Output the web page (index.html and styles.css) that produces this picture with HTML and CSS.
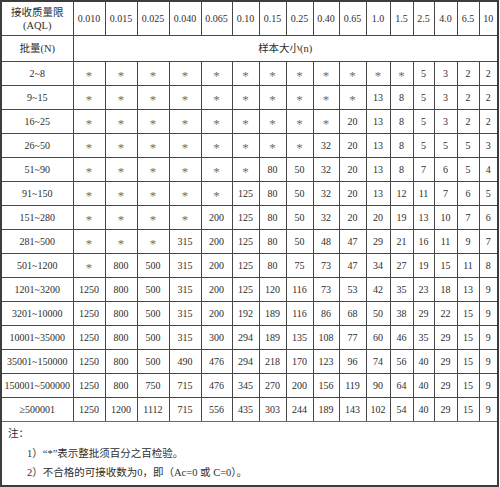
FILE: index.html
```html
<!DOCTYPE html>
<html lang="zh">
<head>
<meta charset="utf-8">
<title>AQL 样本大小</title>
<link rel="stylesheet" href="styles.css">
</head>
<body>
<div class="sheet">
<table class="aql">
<colgroup>
<col class="c0"><col class="w32"><col class="w32"><col class="w32"><col class="w32"><col class="w31"><col class="w27"><col class="w27"><col class="w27"><col class="w26"><col class="w27"><col class="w24"><col class="w23"><col class="w21"><col class="w23"><col class="w22"><col class="w18">
</colgroup>
<tr class="head">
<td class="cn">接收质量限<br>(AQL)</td>
<td>0.010</td><td>0.015</td><td>0.025</td><td>0.040</td><td>0.065</td><td>0.10</td><td>0.15</td><td>0.25</td><td>0.40</td><td>0.65</td><td>1.0</td><td>1.5</td><td>2.5</td><td>4.0</td><td>6.5</td><td>10</td>
</tr>
<tr class="sub">
<td class="cn">批量(N)</td>
<td class="cn" colspan="16">样本大小(n)</td>
</tr>
<tr><td>2~8</td><td class="s">*</td><td class="s">*</td><td class="s">*</td><td class="s">*</td><td class="s">*</td><td class="s">*</td><td class="s">*</td><td class="s">*</td><td class="s">*</td><td class="s">*</td><td class="s">*</td><td class="s">*</td><td>5</td><td>3</td><td>2</td><td>2</td></tr>
<tr><td>9~15</td><td class="s">*</td><td class="s">*</td><td class="s">*</td><td class="s">*</td><td class="s">*</td><td class="s">*</td><td class="s">*</td><td class="s">*</td><td class="s">*</td><td class="s">*</td><td>13</td><td>8</td><td>5</td><td>3</td><td>2</td><td>2</td></tr>
<tr><td>16~25</td><td class="s">*</td><td class="s">*</td><td class="s">*</td><td class="s">*</td><td class="s">*</td><td class="s">*</td><td class="s">*</td><td class="s">*</td><td class="s">*</td><td>20</td><td>13</td><td>8</td><td>5</td><td>3</td><td>2</td><td>2</td></tr>
<tr><td>26~50</td><td class="s">*</td><td class="s">*</td><td class="s">*</td><td class="s">*</td><td class="s">*</td><td class="s">*</td><td class="s">*</td><td class="s">*</td><td>32</td><td>20</td><td>13</td><td>8</td><td>5</td><td>5</td><td>5</td><td>3</td></tr>
<tr><td>51~90</td><td class="s">*</td><td class="s">*</td><td class="s">*</td><td class="s">*</td><td class="s">*</td><td class="s">*</td><td>80</td><td>50</td><td>32</td><td>20</td><td>13</td><td>8</td><td>7</td><td>6</td><td>5</td><td>4</td></tr>
<tr><td>91~150</td><td class="s">*</td><td class="s">*</td><td class="s">*</td><td class="s">*</td><td class="s">*</td><td>125</td><td>80</td><td>50</td><td>32</td><td>20</td><td>13</td><td>12</td><td>11</td><td>7</td><td>6</td><td>5</td></tr>
<tr><td>151~280</td><td class="s">*</td><td class="s">*</td><td class="s">*</td><td class="s">*</td><td>200</td><td>125</td><td>80</td><td>50</td><td>32</td><td>20</td><td>20</td><td>19</td><td>13</td><td>10</td><td>7</td><td>6</td></tr>
<tr><td>281~500</td><td class="s">*</td><td class="s">*</td><td class="s">*</td><td>315</td><td>200</td><td>125</td><td>80</td><td>50</td><td>48</td><td>47</td><td>29</td><td>21</td><td>16</td><td>11</td><td>9</td><td>7</td></tr>
<tr><td>501~1200</td><td class="s">*</td><td>800</td><td>500</td><td>315</td><td>200</td><td>125</td><td>80</td><td>75</td><td>73</td><td>47</td><td>34</td><td>27</td><td>19</td><td>15</td><td>11</td><td>8</td></tr>
<tr><td>1201~3200</td><td>1250</td><td>800</td><td>500</td><td>315</td><td>200</td><td>125</td><td>120</td><td>116</td><td>73</td><td>53</td><td>42</td><td>35</td><td>23</td><td>18</td><td>13</td><td>9</td></tr>
<tr><td>3201~10000</td><td>1250</td><td>800</td><td>500</td><td>315</td><td>200</td><td>192</td><td>189</td><td>116</td><td>86</td><td>68</td><td>50</td><td>38</td><td>29</td><td>22</td><td>15</td><td>9</td></tr>
<tr><td>10001~35000</td><td>1250</td><td>800</td><td>500</td><td>315</td><td>300</td><td>294</td><td>189</td><td>135</td><td>108</td><td>77</td><td>60</td><td>46</td><td>35</td><td>29</td><td>15</td><td>9</td></tr>
<tr><td>35001~150000</td><td>1250</td><td>800</td><td>500</td><td>490</td><td>476</td><td>294</td><td>218</td><td>170</td><td>123</td><td>96</td><td>74</td><td>56</td><td>40</td><td>29</td><td>15</td><td>9</td></tr>
<tr><td>150001~500000</td><td>1250</td><td>800</td><td>750</td><td>715</td><td>476</td><td>345</td><td>270</td><td>200</td><td>156</td><td>119</td><td>90</td><td>64</td><td>40</td><td>29</td><td>15</td><td>9</td></tr>
<tr><td>≥500001</td><td>1250</td><td>1200</td><td>1112</td><td>715</td><td>556</td><td>435</td><td>303</td><td>244</td><td>189</td><td>143</td><td>102</td><td>54</td><td>40</td><td>29</td><td>15</td><td>9</td></tr>
</table>
<div class="notes">
<p class="note-title">注：</p>
<p class="note">1）“*”表示整批须百分之百检验。</p>
<p class="note">2）不合格的可接收数为0，即（Ac=0 或 C=0）。</p>
</div>
</div>
</body>
</html>
```
FILE: styles.css
```css
html, body {
  margin: 0;
  padding: 0;
  background: #ffffff;
}

.sheet {
  width: 499px;
  box-sizing: border-box;
  border: 2px solid #3d3d3d;
  font-family: "Liberation Serif", "Noto Sans CJK SC", serif;
  font-size: 10px;
  color: #2e2e2e;
  background: #ffffff;
}

.aql {
  border-collapse: collapse;
  border-style: hidden;
  table-layout: fixed;
  width: 495px;
}

.c0 { width: 71px; }
.w32 { width: 32px; }
.w31 { width: 31px; }
.w27 { width: 27px; }
.w26 { width: 26px; }
.w24 { width: 24px; }
.w23 { width: 23px; }
.w22 { width: 22px; }
.w21 { width: 21px; }
.w18 { width: 18px; }

.aql td {
  border: 1px solid #474747;
  padding: 0;
  text-align: center;
  vertical-align: middle;
  white-space: nowrap;
  height: 23px;
  line-height: 12px;
}

.aql .head td {
  height: 33px;
  line-height: 13px;
}

.aql .sub td {
  height: 25px;
}

.aql .cn {
  font-size: 10.5px;
}

.aql .s {
  color: #6e6e6e;
  font-size: 13px;
  padding-top: 4px;
  height: 19px;
}

.notes {
  border-top: 1px solid #6a6a6a;
  padding: 2px 0 3px 6px;
  font-family: "Liberation Serif", "Noto Sans CJK SC", serif;
  font-size: 10.5px;
}

.note-title {
  margin: 0;
  line-height: 20px;
}

.note {
  margin: 0 0 0 19px;
  line-height: 19px;
}
```
